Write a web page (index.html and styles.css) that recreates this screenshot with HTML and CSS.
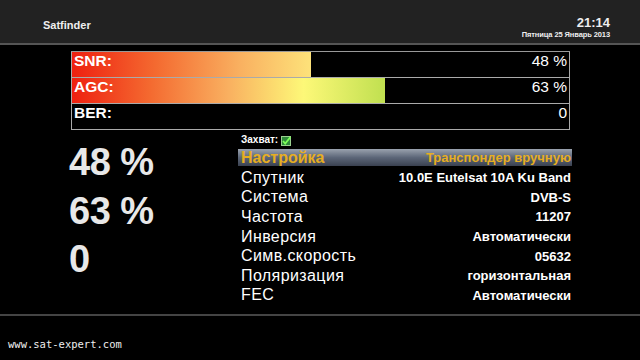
FILE: index.html
```html
<!DOCTYPE html>
<html lang="ru">
<head>
  <meta charset="UTF-8">
  <title>Satfinder</title>
  <link rel="stylesheet" href="styles.css">
</head>
<body>
  <div class="screen">
    <!-- Header -->
    <div class="header">
      <div class="title">Satfinder</div>
      <div class="clock">
        <div class="time">21:14</div>
        <div class="date">Пятница 25 Январь 2013</div>
      </div>
    </div>

    <!-- Signal bars -->
    <div class="bars">
      <div class="bar">
        <div class="fill snr" style="width: 48%"></div>
        <span class="bar-label">SNR:</span>
        <span class="bar-value">48 %</span>
      </div>
      <div class="bar">
        <div class="fill agc" style="width: 63%"></div>
        <span class="bar-label">AGC:</span>
        <span class="bar-value">63 %</span>
      </div>
      <div class="bar">
        <span class="bar-label">BER:</span>
        <span class="bar-value">0</span>
      </div>
    </div>

    <div class="main">
      <div class="big">
        <div class="big-num">48 %</div>
        <div class="big-num">63 %</div>
        <div class="big-num">0</div>
      </div>

      <div class="info">
        <div class="lock">Захват:
          <svg class="check" width="10" height="10" viewBox="0 0 10 10">
            <rect x="0.5" y="0.5" width="9" height="9" fill="#2f8a3a" stroke="#9ad08f"/>
            <path d="M2 5 L4.2 7.5 L9.5 1" fill="none" stroke="#7dff5a" stroke-width="1.8"/>
          </svg>
        </div>
        <div class="row selected">
          <span class="name">Настройка</span>
          <span class="val">Транспондер вручную</span>
        </div>
        <div class="row"><span class="name">Спутник</span><span class="val">10.0E Eutelsat 10A Ku Band</span></div>
        <div class="row"><span class="name">Система</span><span class="val">DVB-S</span></div>
        <div class="row"><span class="name">Частота</span><span class="val">11207</span></div>
        <div class="row"><span class="name">Инверсия</span><span class="val">Автоматически</span></div>
        <div class="row"><span class="name">Симв.скорость</span><span class="val">05632</span></div>
        <div class="row"><span class="name">Поляризация</span><span class="val">горизонтальная</span></div>
        <div class="row"><span class="name">FEC</span><span class="val">Автоматически</span></div>
      </div>
    </div>

    <!-- Footer -->
    <div class="footer">
      <div class="url">www.sat-expert.com</div>
    </div>
  </div>
</body>
</html>
```

FILE: styles.css
```css
body {
  margin: 0;
  padding: 0;
  background: #000;
  font-family: "Liberation Sans", Arial, sans-serif;
  color: #fff;
}
.screen {
  width: 640px;
  height: 360px;
  overflow: hidden;
  background: #000;
  display: flex;
  flex-direction: column;
}
.screen > div {
  flex-shrink: 0;
}
.header {
  background: #222;
  border-bottom: 2px solid #555;
  display: flex;
  justify-content: space-between;
  align-items: flex-end;
  padding: 0 30px 3px 43px;
  box-sizing: border-box;
  height: 45px;
}
.title {
  font-weight: bold;
  font-size: 11px;
  margin-bottom: 9px;
  color: #eee;
}
.clock {
  text-align: right;
  color: #eee;
}
.time {
  font-weight: bold;
  font-size: 13px;
  line-height: 14px;
}
.date {
  font-size: 7.5px;
  font-weight: bold;
  line-height: 10px;
  letter-spacing: -0.1px;
}
.bars {
  margin: 6px 0 0 71px;
  width: 499px;
  border-top: 1px solid #999;
}
.bar {
  position: relative;
  height: 25px;
  border: 1px solid #aaa;
  border-top: none;
  display: flex;
  justify-content: space-between;
  align-items: flex-start;
}
.fill {
  position: absolute;
  left: 0;
  top: 0;
  bottom: 0;
}
.snr {
  background: linear-gradient(to right, #ee2010, #f46a30 35%, #f9b060 70%, #fde27a);
}
.agc {
  background: linear-gradient(to right, #ee2010, #f46a30 25%, #f9b060 50%, #fdf878 74%, #c0e050);
}
.bar-label, .bar-value {
  position: relative;
  font-size: 15.5px;
  line-height: 17px;
  padding: 0 2px;
}
.bar-label {
  font-weight: bold;
}
.main {
  display: flex;
  height: 184px;
}
.big {
  width: 168px;
  padding: 8px 0 0 69px;
  box-sizing: border-box;
}
.big-num {
  font-size: 38px;
  font-weight: bold;
  line-height: 48.5px;
  color: #e8e8e8;
  letter-spacing: -0.5px;
}
.info {
  width: 334px;
  margin-left: 70px;
}
.lock {
  font-size: 10px;
  font-weight: bold;
  height: 19px;
  line-height: 14px;
  padding-left: 3px;
  padding-top: 1px;
  box-sizing: border-box;
  display: flex;
  align-items: center;
  gap: 3px;
}
.check {
  margin-top: 1px;
}
.row {
  display: flex;
  justify-content: space-between;
  align-items: center;
  height: 19.6px;
  padding: 0 1px 0 3px;
}
.name {
  font-size: 16px;
  letter-spacing: 0.4px;
}
.val {
  font-size: 13px;
  font-weight: bold;
}
.selected {
  height: 17px;
  margin-bottom: 2px;
  background: linear-gradient(to bottom, #9aa2ae, #5c6678 50%, #3a4150);
}
.selected .name,
.selected .val {
  color: #e6ae22;
  font-weight: bold;
}
.selected .name {
  letter-spacing: 0;
}
.footer {
  border-top: 2px solid #444;
  flex: 1;
  padding: 22px 0 0 8px;
}
.url {
  font-family: "DejaVu Sans Mono", monospace;
  font-size: 10.5px;
  color: #eee;
}
```
